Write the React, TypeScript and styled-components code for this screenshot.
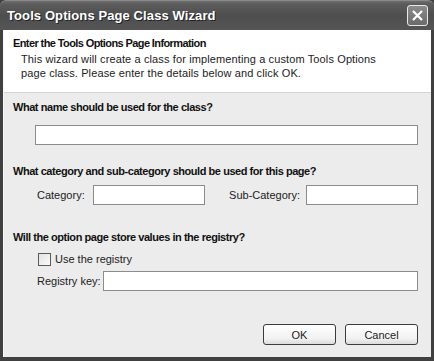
import styled, { createGlobalStyle } from "styled-components";

const GlobalStyle = createGlobalStyle`
  html, body {
    margin: 0;
    padding: 0;
    background: #ffffff;
  }
  * {
    box-sizing: border-box;
  }
`;

const Window = styled.div`
  width: 434px;
  height: 361px;
  display: flex;
  flex-direction: column;
  background: #404040;
  font-family: "Liberation Sans", Arial, sans-serif;
  font-size: 11px;
  color: #111;
`;

const TitleBar = styled.div`
  height: 30px;
  flex: none;
  display: flex;
  align-items: center;
  justify-content: space-between;
  padding: 0 5px 0 7px;
  background: linear-gradient(#6e6e6e 0px, #5c5c5c 3px, #4e4e4e 50%, #555 100%);
  border-top: 1px solid #8a8a8a;
  border-radius: 6px 6px 0 0;
`;

const TitleText = styled.div`
  color: #fff;
  font-weight: bold;
  font-size: 13px;
  text-shadow: 1px 1px 0 #222;
  letter-spacing: 0.1px;
`;

const CloseButton = styled.div`
  width: 21px;
  height: 21px;
  margin-right: 1px;
  border: 1px solid #e8e8e8;
  border-radius: 3px;
  background: linear-gradient(#8c8c8c, #6a6a6a);
  display: flex;
  align-items: center;
  justify-content: center;
`;

const Frame = styled.div`
  flex: 1;
  display: flex;
  padding: 0 3px 4px 3px;
`;

const Client = styled.div`
  flex: 1;
  display: flex;
  flex-direction: column;
  background: #ececec;
  border-left: 1px solid #f8f8f8;
`;

const Header = styled.div`
  height: 63px;
  flex: none;
  background: #fff;
  border-bottom: 1px solid #d4d4d4;
  padding: 6px 10px 0 9px;
`;

const HeaderTitle = styled.div`
  font-weight: bold;
  line-height: 14px;
  letter-spacing: -0.6px;
`;

const HeaderText = styled.div`
  margin: 2px 0 0 8px;
  line-height: 14px;
  letter-spacing: 0.12px;
  color: #222;
`;

const Content = styled.div`
  flex: 1;
  display: flex;
  flex-direction: column;
  padding: 7px 13px 12px 9px;
`;

const SectionTitle = styled.div<{ $gap: number }>`
  font-weight: bold;
  line-height: 14px;
  letter-spacing: -0.45px;
  margin-top: ${(p) => p.$gap}px;
`;

const TextBox = styled.input<{ $width?: number }>`
  height: 20px;
  border: 1px solid #8c8c8c;
  background: #fff;
  padding: 0 3px;
  font: inherit;
  outline: none;
  flex: ${(p) => (p.$width ? "none" : "1")};
  width: ${(p) => (p.$width ? `${p.$width}px` : "auto")};
  min-width: 0;
`;

const NameRow = styled.div`
  display: flex;
  margin: 11px 0 0 22px;
`;

const CategoryRow = styled.div`
  display: flex;
  justify-content: space-between;
  margin: 7px 0 0 24px;
`;

const Field = styled.label<{ $gap: number; $grow?: boolean }>`
  display: flex;
  align-items: center;
  gap: ${(p) => p.$gap}px;
  flex: ${(p) => (p.$grow ? "1" : "none")};
  color: #222;
`;

const CheckRow = styled.label`
  display: flex;
  align-items: center;
  gap: 4px;
  height: 16px;
  margin: 7px 0 0 25px;
  color: #222;
`;

const CheckBox = styled.span`
  width: 13px;
  height: 13px;
  border: 1px solid #5a5a5a;
  background: linear-gradient(135deg, #e2e2e2, #fafafa);
`;

const RegistryRow = styled.div`
  display: flex;
  margin: 4px 0 0 24px;
`;

const ButtonRow = styled.div`
  margin-top: auto;
  display: flex;
  justify-content: flex-end;
  gap: 9px;
`;

const Button = styled.button`
  width: 73px;
  height: 21px;
  border: 1px solid #3c3c3c;
  border-radius: 3px;
  background: linear-gradient(#ffffff, #f2f2f2 70%, #dcdcdc);
  font: inherit;
  color: #222;
  padding: 0;
`;

export default function App() {
  return (
    <>
      <GlobalStyle />
      <Window>
        <TitleBar>
          <TitleText>Tools Options Page Class Wizard</TitleText>
          <CloseButton>
            <svg width="13" height="13" viewBox="0 0 13 13">
              <path d="M2 2 L11 11 M11 2 L2 11" stroke="#fff" strokeWidth="2.2" />
            </svg>
          </CloseButton>
        </TitleBar>
        <Frame>
          <Client>
            <Header>
              <HeaderTitle>Enter the Tools Options Page Information</HeaderTitle>
              <HeaderText>
                This wizard will create a class for implementing a custom Tools Options
                <br />
                page class. Please enter the details below and click OK.
              </HeaderText>
            </Header>
            <Content>
              <SectionTitle $gap={0}>What name should be used for the class?</SectionTitle>
              <NameRow>
                <TextBox />
              </NameRow>

              <SectionTitle $gap={19}>
                What category and sub-category should be used for this page?
              </SectionTitle>
              <CategoryRow>
                <Field $gap={8}>
                  Category:
                  <TextBox $width={112} />
                </Field>
                <Field $gap={6}>
                  Sub-Category:
                  <TextBox $width={112} />
                </Field>
              </CategoryRow>

              <SectionTitle $gap={25}>Will the option page store values in the registry?</SectionTitle>
              <CheckRow>
                <CheckBox />
                Use the registry
              </CheckRow>
              <RegistryRow>
                <Field $gap={2} $grow>
                  Registry key:
                  <TextBox />
                </Field>
              </RegistryRow>

              <ButtonRow>
                <Button>OK</Button>
                <Button>Cancel</Button>
              </ButtonRow>
            </Content>
          </Client>
        </Frame>
      </Window>
    </>
  );
}
